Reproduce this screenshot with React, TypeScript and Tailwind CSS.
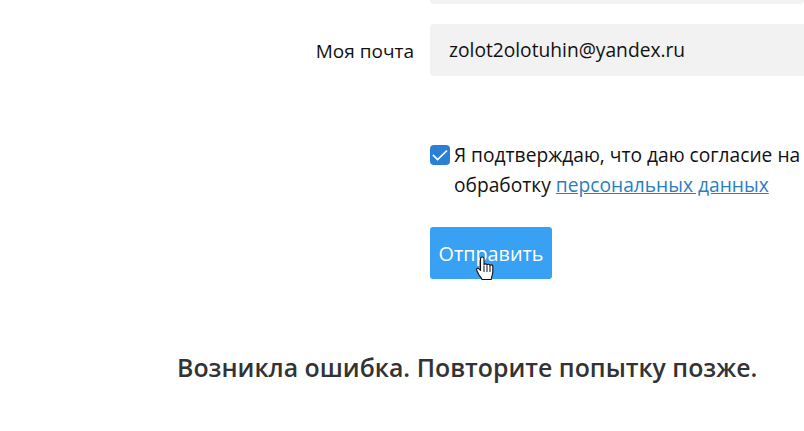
export default function App() {
  return (
    <div className="w-[804px] h-[431px] overflow-hidden bg-white font-['Open_Sans',sans-serif] text-[19.2px] text-[#111]">
      <div className="ml-[430px] h-[4px] bg-[#f2f2f2] rounded-b-[4px]" />
      <div className="mt-[20px] flex items-center">
        <label className="w-[414px] pt-[3px] text-right leading-[25px] text-[19px]">Моя почта</label>
        <div className="ml-[16px] flex-1 h-[52px] bg-[#f2f2f2] rounded-l-[4px] pl-[19px] pb-[1px] flex items-center leading-[25px]">zolot2olotuhin@yandex.ru</div>
      </div>
      <div className="mt-[65px] ml-[430px] flex items-start">
        <span className="mt-[4px] w-[20px] h-[20px] shrink-0 rounded-[4px] bg-[#2b7fd6] flex items-center justify-center">
          <svg width="16" height="16" viewBox="0 0 16 16" fill="none" stroke="#fff" strokeWidth="1.7"><path d="M0.8 7.8l4.8 4.8L15 3.5" /></svg>
        </span>
        <p className="ml-[4px] leading-[30px] -mt-[1px] whitespace-nowrap">
          Я подтверждаю, что даю согласие на<br />обработку <a className="text-[#2a7fbd] underline">персональных данных</a>
        </p>
      </div>
      <div className="relative mt-[27px] ml-[430px] w-[122px] h-[52px] rounded-[3px] bg-[#38a1f3] pt-[2px] flex items-center justify-center text-white text-[19.8px]">
        Отправить
        <svg className="absolute left-[46px] top-[29px]" width="18" height="25" viewBox="0 0 18 25">
          <path d="M4.5 2.5c0-2 3.5-2 3.5 0V9c0-1.6 3-1.6 3 .3 0-1.4 3-1.4 3 .4 0-1.2 2.8-1.2 2.8.6V16c0 3-1.5 4-1.5 7.5H6c-.5-2-2-3-3-4.5L.8 14.5c-.9-1.9 1-3 2.3-1.6l1.4 1.6z" fill="#fff" stroke="#111" strokeWidth="1.1" strokeLinejoin="round" />
          <path d="M8 10v6M11 10v6M14 10v6" stroke="#111" strokeWidth="1" fill="none" />
        </svg>
      </div>
      <h2 className="mt-[70px] ml-[177px] text-[24.87px] font-semibold leading-[36px] text-[#333] whitespace-nowrap">Возникла ошибка. Повторите попытку позже.</h2>
    </div>
  );
}
